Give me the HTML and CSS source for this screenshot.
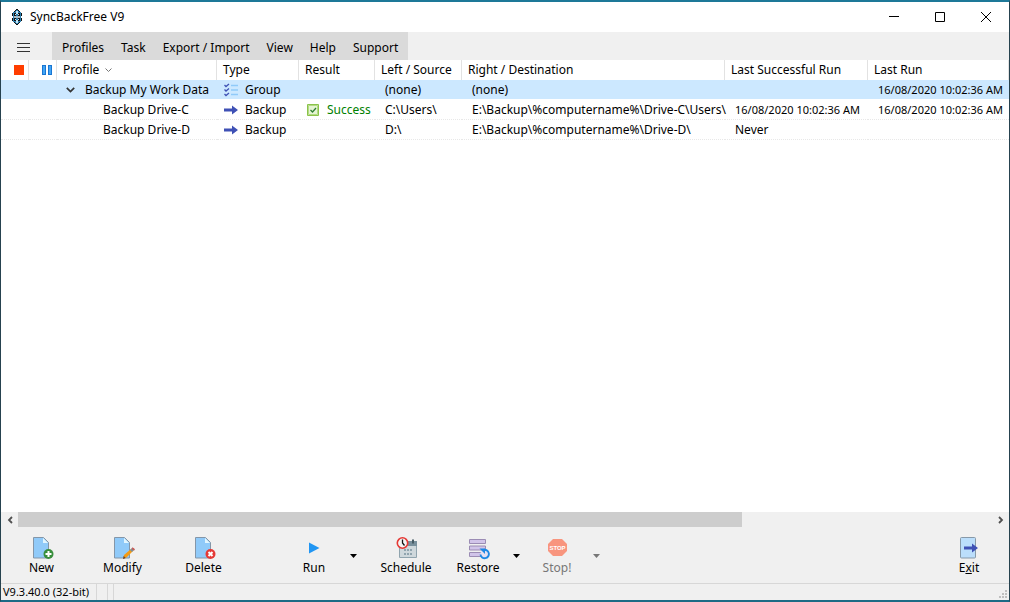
FILE: index.html
```html
<!DOCTYPE html>
<html lang="en">
<head>
<meta charset="utf-8">
<title>SyncBackFree V9</title>
<link rel="stylesheet" href="styles.css">
</head>
<body>
<svg class="defs" aria-hidden="true">
  <symbol id="page" viewBox="0 0 24 24">
    <path d="M3.500 1.500h10l5 5v15.500h-15z" fill="#90caf9" stroke="#8496a8"/>
    <path d="M13 2v5h5z" fill="#e1f5fe"/>
  </symbol>
  <symbol id="arrow" viewBox="0 0 14 10">
    <path d="M0 3.500h8V0.500l6 4.500-6 4.500V6.500H0z" fill="#3f51b5"/>
  </symbol>
  <symbol id="caret" viewBox="0 0 7 4"><path d="M0 0h7L3.500 4z" fill="currentColor"/></symbol>
</svg>
<div class="window">
  <header class="titlebar">
    <svg class="logo" viewBox="0 0 12 16" shape-rendering="crispEdges">
      <path d="M5 0h2v1h1v1h1v1h1v1h1v3h-1v2h1v3h-1v1H9v1H8v1H7v1H5v-1H4v-1H3v-1H2v-1H1V9h1V7H1V4h1V3h1V2h1V1h1z" fill="#2f7fae"/>
      <path d="M5 0h2v1h1v1h1v1H8V2H7V1H5v1H4v1H3V2h1V1h1zM1 4h1v3H1zM10 4h1v3h-1zM1 9h1v3H1zM10 9h1v3h-1zM3 13h1v1h1v1h2v-1h1v-1h1v1H8v1H7v1H5v-1H4v-1H3zM3 4h2v3H3zM7 4h2v3H7zM3 9h2v3H3zM7 9h2v3H7z" fill="#111"/>
      <path d="M5 2h2v3H5zM5 11h2v3H5zM4 5h1v1H4zM7 5h1v1H7zM4 10h1v1H4zM7 10h1v1H7z" fill="#c4e6f7"/>
      <path d="M3 7h6v2H3z" fill="#a9bcc8"/>
    </svg>
    <h1 class="title">SyncBackFree V9</h1>
    <button class="winbtn" aria-label="Minimize"><svg viewBox="0 0 12 12"><path d="M1 5.500h10" stroke="#000" fill="none"/></svg></button>
    <button class="winbtn" aria-label="Maximize"><svg viewBox="0 0 12 12"><path d="M1.500 1.500h9v9h-9z" stroke="#000" fill="none"/></svg></button>
    <button class="winbtn" aria-label="Close"><svg viewBox="0 0 12 12"><path d="M1 1l10 10M11 1L1 11" stroke="#000" fill="none"/></svg></button>
  </header>
  <nav class="menubar">
    <button class="burger" aria-label="Menu"><svg viewBox="0 0 13 11"><path d="M0 1.500h13M0 5.500h13M0 9.500h13" stroke="#333"/></svg></button>
    <div class="menus">
      <button class="menu">Profiles</button>
      <button class="menu">Task</button>
      <button class="menu">Export / Import</button>
      <button class="menu">View</button>
      <button class="menu">Help</button>
      <button class="menu">Support</button>
    </div>
  </nav>
  <main class="list">
    <table class="grid">
      <colgroup><col class="c-stop"><col class="c-pause"><col class="c-profile"><col class="c-type"><col class="c-result"><col class="c-left"><col class="c-right"><col class="c-success"><col></colgroup>
      <thead>
        <tr>
          <th class="icon-cell"><svg class="i-stop" viewBox="0 0 10 10" role="img" aria-label="Stop"><path d="M0 0h10v10H0z" fill="#ff3d00"/></svg></th>
          <th class="icon-cell"><svg class="i-pause" viewBox="0 0 10 10" role="img" aria-label="Pause"><path d="M0 0h4v10H0zM6 0h4v10H6z" fill="#1976d2"/><path d="M1 1h2v8H1zM7 1h2v8H7z" fill="#42a5f5"/></svg></th>
          <th>Profile<svg class="sort" viewBox="0 0 7 5"><path d="M.5 .5l3 3 3-3" stroke="#777" fill="none"/></svg></th>
          <th>Type</th><th>Result</th><th>Left / Source</th><th>Right / Destination</th><th>Last Successful Run</th><th>Last Run</th>
        </tr>
      </thead>
      <tbody>
        <tr class="selected">
          <td></td><td></td>
          <td class="group"><svg class="expander" viewBox="0 0 9 6"><path d="M.8 .8l3.700 3.700L8.200 .8" stroke="#333" stroke-width="1.700" fill="none"/></svg>Backup My Work Data</td>
          <td><svg class="type" viewBox="0 0 14 14"><path d="M.5 2l1.500 1.500L5 1M.5 6.500L2 8 5 5.500M.5 11L2 12.500 5 10" stroke="#3f51b5" stroke-width="1.300" fill="none"/><path d="M7 2.500h7M7 7h7M7 11.500h7" stroke="#90caf9" stroke-width="1.500"/></svg>Group</td>
          <td></td><td>(none)</td><td>(none)</td><td></td><td class="data">16/08/2020 10:02:36 AM</td>
        </tr>
        <tr>
          <td></td><td></td><td class="child">Backup Drive-C</td>
          <td><svg class="type"><use href="#arrow"/></svg>Backup</td>
          <td class="ok"><svg class="check" viewBox="0 0 12 12"><path d="M.5 .5h11v11H.5z" fill="#e5f4d3" stroke="#8bc34a" stroke-width="1"/><path d="M1.500 1.500h9v9h-9z" fill="none" stroke="#b2da83"/><path d="M3.500 6l2 2 3.500-4" fill="none" stroke="#2e7d32" stroke-width="1.300"/></svg>Success</td>
          <td>C:\Users\</td><td>E:\Backup\%computername%\Drive-C\Users\</td><td class="data">16/08/2020 10:02:36 AM</td><td class="data">16/08/2020 10:02:36 AM</td>
        </tr>
        <tr>
          <td></td><td></td><td class="child">Backup Drive-D</td>
          <td><svg class="type"><use href="#arrow"/></svg>Backup</td>
          <td></td><td>D:\</td><td>E:\Backup\%computername%\Drive-D\</td><td>Never</td><td></td>
        </tr>
      </tbody>
    </table>
  </main>
  <div class="scroll">
    <button class="scroll-btn" aria-label="Scroll left"><svg viewBox="0 0 6 8"><path d="M5 1L2 4l3 3" stroke="#505050" stroke-width="1.800" fill="none"/></svg></button>
    <div class="track"><div class="thumb"></div></div>
    <button class="scroll-btn" aria-label="Scroll right"><svg viewBox="0 0 6 8"><path d="M1 1l3 3-3 3" stroke="#505050" stroke-width="1.800" fill="none"/></svg></button>
  </div>
  <div class="toolbar">
    <button class="tool wide"><svg viewBox="0 0 24 24"><use href="#page"/><circle cx="18.500" cy="18" r="5" fill="#388e3c"/><path d="M18.500 15v6M15.500 18h6" stroke="#fff" stroke-width="2"/></svg>New</button>
    <button class="tool wide"><svg viewBox="0 0 24 24"><use href="#page"/><path d="M12 23l1-4 7-6 2 2-6.500 6.500z" fill="#f59b14"/><path d="M12 23l.7-3 2 2z" fill="#5d4037"/><path d="M19 14l2-2 2 2-2 2z" fill="#78909c"/><path d="M21 12.500l1-.7 1.500 1.500-.7 1z" stroke="#c65b55" fill="#c65b55"/></svg>Modify</button>
    <button class="tool wide"><svg viewBox="0 0 24 24"><use href="#page"/><circle cx="18.500" cy="18" r="5" fill="#e53935"/><path d="M16.500 16l4 4M20.500 16l-4 4" stroke="#fff" stroke-width="2"/></svg>Delete</button>
    <button class="tool run"><svg viewBox="0 0 24 24"><path d="M7 6.500l10.500 5.500L7 17.500z" fill="#2196f3"/></svg>Run</button>
    <button class="drop" aria-label="Run options"><svg><use href="#caret"/></svg></button>
    <button class="tool schedule"><svg viewBox="0 0 24 24"><path d="M5.500 8h17v13.500h-17z" fill="#cfd8dc" stroke="#90a4ae"/><path d="M5 5h18v5H5z" fill="#78909c"/><path d="M18 3.500h2v4h-2z" fill="#455a64"/><path d="M10 13h2v2h-2zM13 13h2v2h-2zM16 13h2v2h-2zM10 17h2v2h-2zM13 17h2v2h-2zM16 17h2v2h-2z" fill="#90a4ae"/><circle cx="8.500" cy="7" r="5.200" fill="#f5f5f5" stroke="#e53935" stroke-width="1.600"/><path d="M8.500 3.500V7l2 2.500" stroke="#111" stroke-width="1.300" fill="none"/></svg>Schedule</button>
    <button class="tool restore"><svg viewBox="0 0 24 24"><path d="M3.500 3.500h16v4h-16zM3.500 10h16v4h-16zM3.500 16.500h16v4h-16z" fill="#d1c4e9" stroke="#9b8cb4"/><circle cx="18.500" cy="18" r="4" fill="#e6e0f2"/><path d="M17.500 14a4.200 4.200 0 1 1-3 4.500" fill="none" stroke="#1e88e5" stroke-width="1.900"/><path d="M13.500 12.500h5.500v5.500z" fill="#1e88e5"/></svg>Restore</button>
    <button class="drop" aria-label="Restore options"><svg><use href="#caret"/></svg></button>
    <button class="tool stop" disabled><svg viewBox="0 0 24 24"><path d="M8 3h9l5 5v7l-5 5H8l-5-5V8z" fill="#f8957e"/><text x="12.500" y="14" class="stop-word">STOP</text></svg>Stop!</button>
    <button class="drop" disabled aria-label="Stop options"><svg><use href="#caret"/></svg></button>
    <button class="tool exit"><svg viewBox="0 0 24 24"><rect x="3.500" y="1.500" width="15" height="20.500" rx="1" fill="#bbdefb" stroke="#8799a8"/><path d="M7 10.500h8V7.500l6 4.500-6 4.500v-3H7z" fill="#3f51b5"/></svg><span>E<u>x</u>it</span></button>
  </div>
  <footer class="status">
    <span class="panel version">V9.3.40.0 (32-bit)</span><span class="panel"></span><span class="panel slim"></span>
    <svg class="grip" viewBox="0 0 8 8" shape-rendering="crispEdges"><path d="M6 0h2v2H6zM3 3h2v2H3zM6 3h2v2H6zM0 6h2v2H0zM3 6h2v2H3zM6 6h2v2H6z" fill="#bfbfbf"/></svg>
  </footer>
</div>
</body>
</html>
```

FILE: styles.css
```css
* { box-sizing: border-box; }
body {
  margin: 0;
  font: 12px/16px "Segoe UI", "Noto Sans", "Open Sans", sans-serif;
  color: #000;
}
.defs { position: absolute; width: 0; height: 0; }
svg { flex: none; }
button {
  border: 0;
  padding: 0;
  background: none;
  font: inherit;
  color: inherit;
}
.window {
  display: flex;
  flex-direction: column;
  min-height: 100vh;
  border: 1px solid #26424f;
  border-top: 2px solid #1d7898;
  border-bottom: 2px solid #1d6a85;
  background: #f0f0f0;
}
.titlebar {
  display: flex;
  align-items: center;
  height: 30px;
  padding-left: 10px;
  background: #fff;
}
.logo { width: 12px; height: 16px; }
.title { flex: 1; margin: 0 0 0 7px; font-size: inherit; font-weight: 400; }
.winbtn { display: flex; align-items: center; justify-content: center; width: 46px; height: 28px; }
.winbtn svg { width: 12px; height: 12px; }
.menubar { display: flex; height: 28px; }
.burger { display: flex; align-items: center; justify-content: center; width: 51px; padding: 3px 6px 0 0; }
.burger svg { width: 13px; height: 11px; }
.menus { display: flex; gap: 1px; padding: 4px 2px 0; background: #dadada; }
.menu { padding: 0 8px; white-space: nowrap; }
.list { flex: 1; background: #fff; overflow: hidden; }
.grid { width: 100%; table-layout: fixed; border-collapse: separate; border-spacing: 0; }
.c-stop, .c-pause { width: 28px; }
.c-profile { width: 160px; }
.c-type { width: 82px; }
.c-result { width: 76px; }
.c-left { width: 87px; }
.c-right { width: 263px; }
.c-success { width: 143px; }
th, td { height: 20px; white-space: nowrap; text-align: left; font-weight: 400; vertical-align: middle; }
th { padding: 0 0 0 6px; border-right: 1px solid #e2e2e2; }
td { padding: 0 0 0 10px; border-bottom: 1px dotted #e8e8e8; }
td svg, th svg { vertical-align: middle; }
.data { font-size: 11px; }
.icon-cell { padding: 0 4px 0 0; text-align: right; line-height: 10px; }
.i-stop, .i-pause { width: 10px; height: 10px; }
.sort { width: 7px; height: 5px; margin-left: 6px; }
.selected td { background: #cce8ff; border-bottom-color: #fff; background-clip: padding-box; }
.group { padding-left: 9px; }
.expander { width: 9px; height: 6px; margin-right: 10px; }
.child { padding-left: 46px; }
td .type { width: 14px; height: 14px; margin: 0 7px 0 -3px; }
td .type:has(use) { height: 10px; }
.check { width: 12px; height: 12px; margin: 0 8px 0 -2px; }
.ok { color: #008000; }
.scroll { display: flex; height: 15px; }
.scroll-btn { display: flex; align-items: center; justify-content: center; width: 17px; }
.scroll-btn svg { width: 6px; height: 8px; }
.track { flex: 1; }
.thumb { width: 74.3%; height: 100%; background: #cdcdcd; }
.toolbar { display: flex; height: 57px; padding-top: 9px; border-bottom: 1px solid #d7d7d7; }
.tool { display: flex; flex-direction: column; align-items: center; white-space: nowrap; }
.tool svg { width: 24px; height: 24px; }
.wide { width: 81px; }
.run { width: 58px; margin-left: 41px; }
.drop { display: flex; justify-content: center; width: 20px; padding-top: 18px; }
.drop svg { width: 7px; height: 4px; }
.schedule { width: 72px; margin-left: 7px; }
.restore { width: 56px; margin-left: 8px; }
.stop { width: 58px; margin-left: 2px; }
.exit { width: 80px; margin-left: auto; }
.stop-word { font: bold 6px "Liberation Sans", sans-serif; fill: #fff; text-anchor: middle; }
button:disabled { color: #777; }
.status { display: flex; height: 16px; font-size: 11px; }
.panel { width: 11px; border-right: 1px solid #d7d7d7; white-space: nowrap; }
.version { width: 96px; padding-left: 2px; }
.slim { width: 6px; }
.grip { width: 8px; height: 8px; margin: 6px 2px 0 auto; }
```
